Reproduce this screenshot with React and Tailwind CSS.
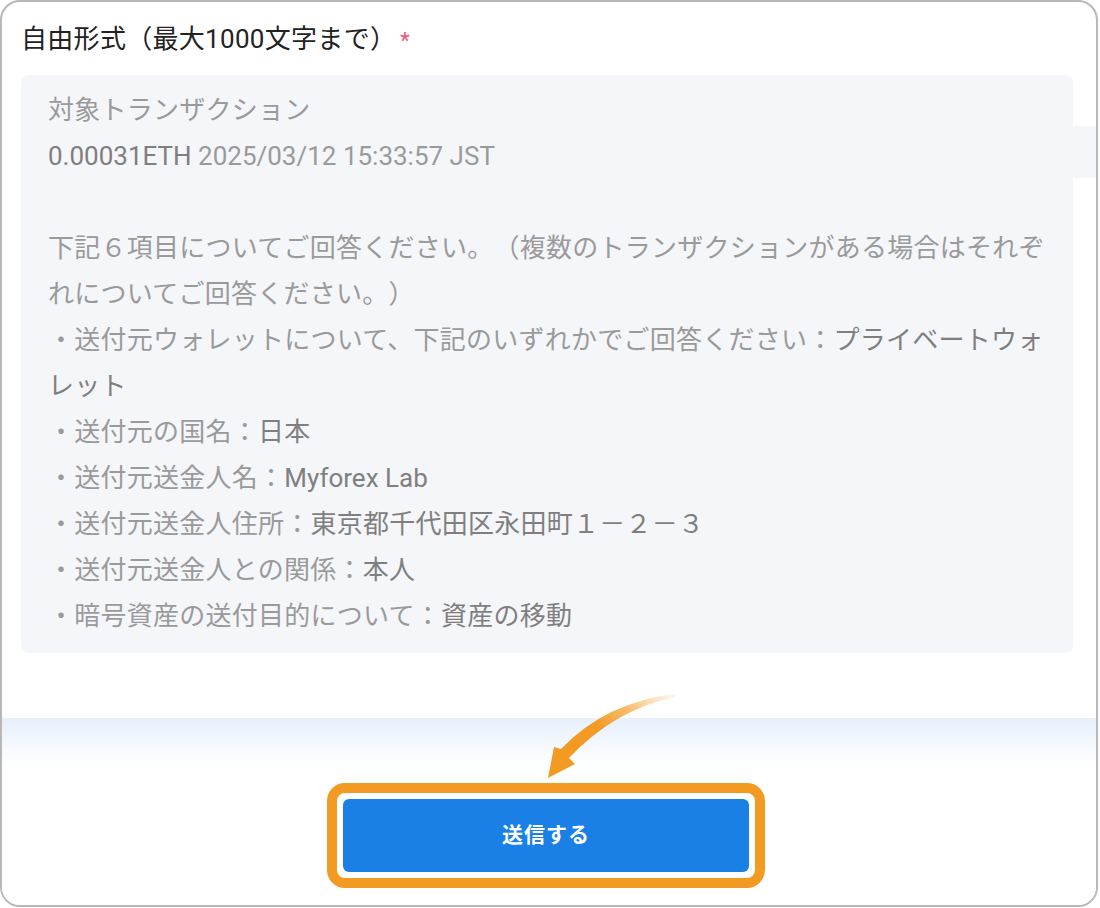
import React from "react";

const L = "text-[#9a9a9a]";
const V = "text-[#7f7f7f]";

function Line({ children, latin }) {
  return (
    <div className={"h-[46px] leading-[46px] whitespace-nowrap " + (latin ? "tracking-normal" : "tracking-[0.25px]")}>
      {children}
    </div>
  );
}

export default function App() {
  return (
    <div
      className="relative w-[1098px] h-[907px] bg-white border-2 border-[#b8b8b8] rounded-[20px] overflow-hidden flex flex-col [text-spacing-trim:space-all]"
      style={{ fontFamily: "Roboto, 'Noto Sans CJK JP', sans-serif" }}
    >
      <div className="px-[19px] pt-[20px]">
        <div className="h-[35px] leading-[35px] text-[26px] tracking-[0.3px] text-[#222222] whitespace-nowrap">
          自由形式（最大1000文字まで）<span className="text-[#f0566b] ml-[4px] text-[22px]">*</span>
        </div>
        <div className="relative mt-[18px] h-[578px] w-[1052px] rounded-[8px] bg-[#f5f6fa] pl-[27px] pt-[12px] text-[26px]">
          <Line><span className={L}>対象トランザクション</span></Line>
          <Line latin><span className={V}>0.00031ETH</span><span className={L}> 2025/03/12 15:33:57 JST</span></Line>
          <Line>{""}</Line>
          <Line><span className={L}>下記６項目についてご回答ください。（複数のトランザクションがある場合はそれぞ</span></Line>
          <Line><span className={L}>れについてご回答ください。）</span></Line>
          <Line><span className={L}>・送付元ウォレットについて、下記のいずれかでご回答ください：</span><span className={V}>プライベートウォ</span></Line>
          <Line><span className={V}>レット</span></Line>
          <Line><span className={L}>・送付元の国名：</span><span className={V}>日本</span></Line>
          <Line><span className={L}>・送付元送金人名：</span><span className={V + " tracking-normal"}>Myforex Lab</span></Line>
          <Line><span className={L}>・送付元送金人住所：</span><span className={V}>東京都千代田区永田町１－２－３</span></Line>
          <Line><span className={L}>・送付元送金人との関係：</span><span className={V}>本人</span></Line>
          <Line><span className={L}>・暗号資産の送付目的について：</span><span className={V}>資産の移動</span></Line>
          <div className="absolute left-[1050px] top-[51px] h-[52px] w-[30px] bg-[#f5f6fa]" />
        </div>
      </div>

      <div className="mt-[65px] flex-1 bg-gradient-to-b from-[#e6effc] via-white via-[25%] to-white flex justify-center pt-[65px]">
        <div className="mr-[6px] h-[105px] rounded-[18px] border-[10px] border-[#f39a22] bg-white p-[6px]">
          <button className="h-[73px] w-[406px] rounded-[6px] bg-[#1a80e5] text-white text-[21px] font-bold tracking-[1px]">
            送信する
          </button>
        </div>
      </div>

      <svg className="absolute left-0 top-0 pointer-events-none" width="1098" height="907" viewBox="0 0 1098 907">
        <defs>
          <linearGradient id="ag" x1="673" y1="693" x2="560" y2="770" gradientUnits="userSpaceOnUse">
            <stop offset="0" stopColor="#f7c98a" stopOpacity="0.15" />
            <stop offset="0.35" stopColor="#f5b050" stopOpacity="0.85" />
            <stop offset="0.6" stopColor="#f39a22" />
            <stop offset="1" stopColor="#f39a22" />
          </linearGradient>
        </defs>
        <path
          d="M673,692 Q604,700 559,747 L552,745 L546,776 L573,762 L567,756 Q612,708 673,695 Z"
          fill="url(#ag)"
        />
      </svg>
    </div>
  );
}
